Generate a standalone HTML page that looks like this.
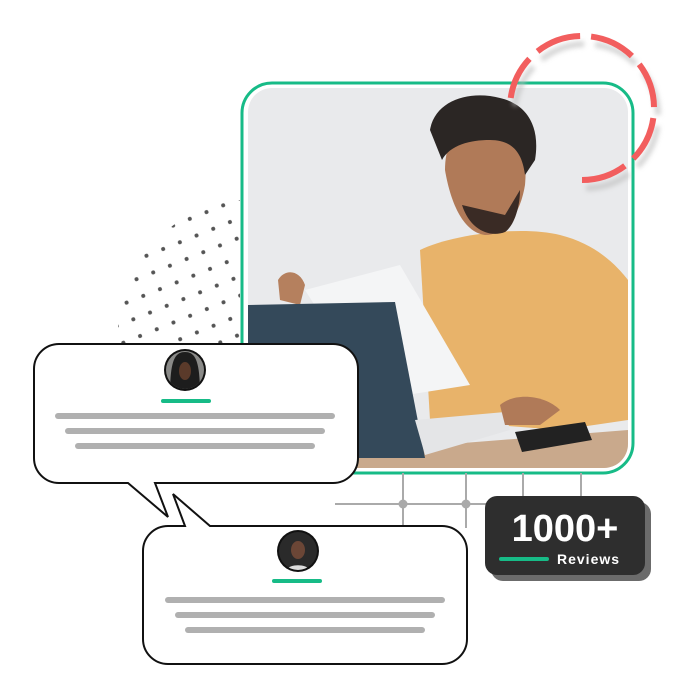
<!DOCTYPE html>
<html><head><style>
html,body{margin:0;padding:0;background:#fff;width:700px;height:700px;overflow:hidden}
</style></head><body>
<svg width="700" height="700" viewBox="0 0 700 700" xmlns="http://www.w3.org/2000/svg">
<defs>
<clipPath id="ph"><rect x="248" y="88" width="380" height="380" rx="24"/></clipPath>
<pattern id="dots" x="0" y="0" width="18" height="18" patternUnits="userSpaceOnUse" patternTransform="rotate(-22)"><circle cx="4" cy="4" r="2" fill="#555"/></pattern>
<clipPath id="dc"><path d="M240 200 C180 205 135 250 118 305 L118 345 L240 345 Z"/></clipPath>
<clipPath id="a1"><circle cx="185" cy="370" r="19"/></clipPath>
<clipPath id="a2"><circle cx="298" cy="551" r="19"/></clipPath>
<filter id="bl"><feGaussianBlur stdDeviation="2.5"/></filter>
</defs>
<rect x="110" y="195" width="135" height="155" fill="url(#dots)" clip-path="url(#dc)"/>
<!-- photo -->
<rect x="242" y="83" width="391" height="390" rx="30" fill="#fff" stroke="#17bb87" stroke-width="3"/>
<g clip-path="url(#ph)">
<rect x="248" y="88" width="380" height="380" fill="#e9eaec"/>
<path d="M248 460 L628 430 L628 468 L248 468Z" fill="#c9a98c"/>
<path d="M420 250 C450 235 520 225 560 235 C600 245 620 270 628 280 L628 420 L560 430 L430 420 Z" fill="#e8b36a"/>
<path d="M445 170 C445 130 470 115 500 120 C520 125 528 150 525 185 C520 215 505 235 485 235 C462 232 450 200 445 170Z" fill="#b07a58"/>
<path d="M430 130 C435 100 470 90 500 98 C530 105 540 130 535 160 L525 175 C522 150 510 140 490 140 C470 140 450 145 442 160 Z" fill="#2b2624"/>
<path d="M462 205 C470 230 490 238 505 232 C515 225 520 205 520 190 L505 215 Z" fill="#3a2b25"/>
<path d="M305 290 L400 265 L470 385 L375 400Z" fill="#f4f5f6"/>
<path d="M278 280 C285 268 300 270 305 285 L300 305 L280 300Z" fill="#b5805e"/>
<path d="M248 305 L395 302 L425 458 L248 458Z" fill="#34495a"/>
<path d="M415 420 L505 412 L510 430 L425 455Z" fill="#e4e5e7"/>
<path d="M515 432 L585 422 L592 440 L522 452Z" fill="#222"/>
<path d="M500 405 C515 392 545 395 560 410 L540 425 L505 425Z" fill="#b07a58"/>
</g>
<!-- red dashed arc -->
<path d="M586 188 A72 72 0 1 0 514.7 106" fill="none" stroke="#bbb" stroke-width="6" stroke-dasharray="46 11" filter="url(#bl)" opacity="0.6"/>
<path d="M582 180 A72 72 0 1 0 510.7 98" fill="none" stroke="#f25e5e" stroke-width="6" stroke-dasharray="46 11"/>
<!-- grid lines -->
<g stroke="#aaa" stroke-width="2">
<line x1="335" y1="504" x2="490" y2="504"/>
<line x1="403" y1="473" x2="403" y2="528"/>
<line x1="466" y1="473" x2="466" y2="528"/>
<line x1="523" y1="473" x2="523" y2="500"/>
<line x1="581" y1="473" x2="581" y2="500"/>
</g>
<circle cx="403" cy="504" r="4.5" fill="#aaa"/><circle cx="466" cy="504" r="4.5" fill="#aaa"/>
<!-- badge -->
<rect x="491" y="502" width="160" height="79" rx="12" fill="#6b6b6b"/>
<rect x="485" y="496" width="160" height="79" rx="12" fill="#2e2e2e"/>
<text x="565" y="541" text-anchor="middle" font-family="Liberation Sans, sans-serif" font-weight="bold" font-size="38" fill="#fff">1000+</text>
<rect x="499" y="557" width="50" height="4" rx="2" fill="#17bb87"/>
<text x="557" y="564" font-family="Liberation Sans, sans-serif" font-weight="bold" font-size="14" letter-spacing="1" fill="#fff">Reviews</text>
<!-- bubble 1 -->
<path d="M59 344 H333 A25 25 0 0 1 358 369 V458 A25 25 0 0 1 333 483 H155 L168 517 L128 483 H59 A25 25 0 0 1 34 458 V369 A25 25 0 0 1 59 344Z" fill="#fff" stroke="#111" stroke-width="2"/>
<circle cx="185" cy="370" r="21" fill="#111"/>
<g clip-path="url(#a1)"><rect x="160" y="345" width="50" height="50" fill="#8a8a88"/><path d="M170 395 C170 360 175 352 185 352 C195 352 200 360 200 395Z" fill="#1d1d1d"/><ellipse cx="185" cy="371" rx="6" ry="9" fill="#5a3a2a"/></g>
<rect x="161" y="399" width="50" height="4" rx="2" fill="#17bb87"/>
<g fill="#b0b0b0"><rect x="55" y="413" width="280" height="6" rx="3"/><rect x="65" y="428" width="260" height="6" rx="3"/><rect x="75" y="443" width="240" height="6" rx="3"/></g>
<!-- bubble 2 -->
<path d="M168 526 H185 L173 494 L210 526 H442 A25 25 0 0 1 467 551 V639 A25 25 0 0 1 442 664 H168 A25 25 0 0 1 143 639 V551 A25 25 0 0 1 168 526Z" fill="#fff" stroke="#111" stroke-width="2"/>
<circle cx="298" cy="551" r="21" fill="#111"/>
<g clip-path="url(#a2)"><rect x="275" y="530" width="50" height="50" fill="#2a2a2a"/><ellipse cx="298" cy="550" rx="7" ry="9" fill="#6b4636"/><path d="M283 575 C285 562 311 562 313 575Z" fill="#ddd"/></g>
<rect x="272" y="579" width="50" height="4" rx="2" fill="#17bb87"/>
<g fill="#b0b0b0"><rect x="165" y="597" width="280" height="6" rx="3"/><rect x="175" y="612" width="260" height="6" rx="3"/><rect x="185" y="627" width="240" height="6" rx="3"/></g>
</svg>
</body></html>
